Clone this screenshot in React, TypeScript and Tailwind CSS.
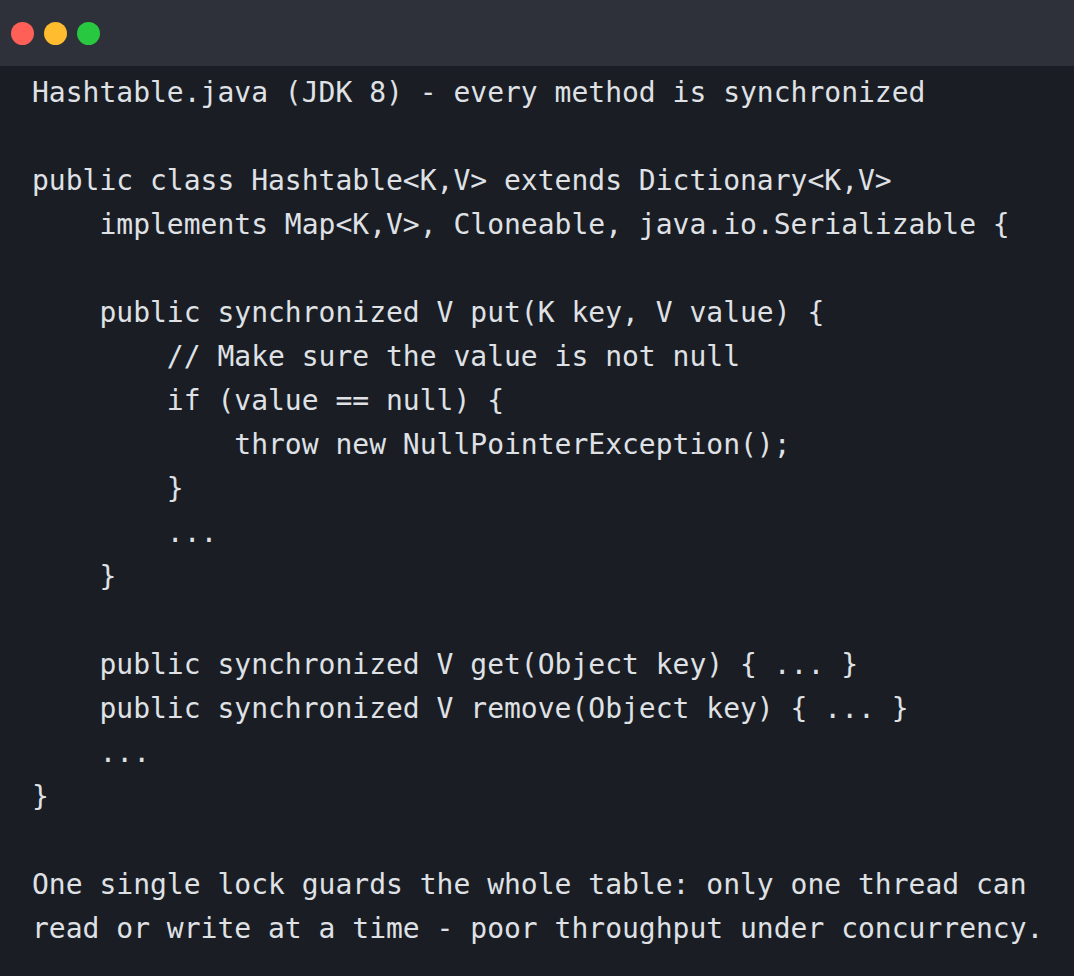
const lines = [
  "Hashtable.java (JDK 8) - every method is synchronized",
  "",
  "public class Hashtable<K,V> extends Dictionary<K,V>",
  "    implements Map<K,V>, Cloneable, java.io.Serializable {",
  "",
  "    public synchronized V put(K key, V value) {",
  "        // Make sure the value is not null",
  "        if (value == null) {",
  "            throw new NullPointerException();",
  "        }",
  "        ...",
  "    }",
  "",
  "    public synchronized V get(Object key) { ... }",
  "    public synchronized V remove(Object key) { ... }",
  "    ...",
  "}",
  "",
  "One single lock guards the whole table: only one thread can",
  "read or write at a time - poor throughput under concurrency.",
];

export default function App() {
  return (
    <div className="flex h-[976px] w-[1074px] flex-col overflow-hidden bg-[#1b1d24]">
      {/* window chrome */}
      <div className="flex h-[66px] shrink-0 items-center gap-[10px] bg-[#2e313a] pl-[11px]">
        <span className="h-[23px] w-[23px] rounded-full bg-[#fe5f57]" />
        <span className="h-[23px] w-[23px] rounded-full bg-[#febc2e]" />
        <span className="h-[23px] w-[23px] rounded-full bg-[#28c840]" />
      </div>
      <pre className="whitespace-pre px-[32px] pt-[5px] font-['DejaVu_Sans_Mono',monospace] text-[28px] leading-[44px] text-[#dfe1e5]">
        {lines.map((line, i) => (
          <div key={i} className="h-[44px]">
            {line}
          </div>
        ))}
      </pre>
    </div>
  );
}
